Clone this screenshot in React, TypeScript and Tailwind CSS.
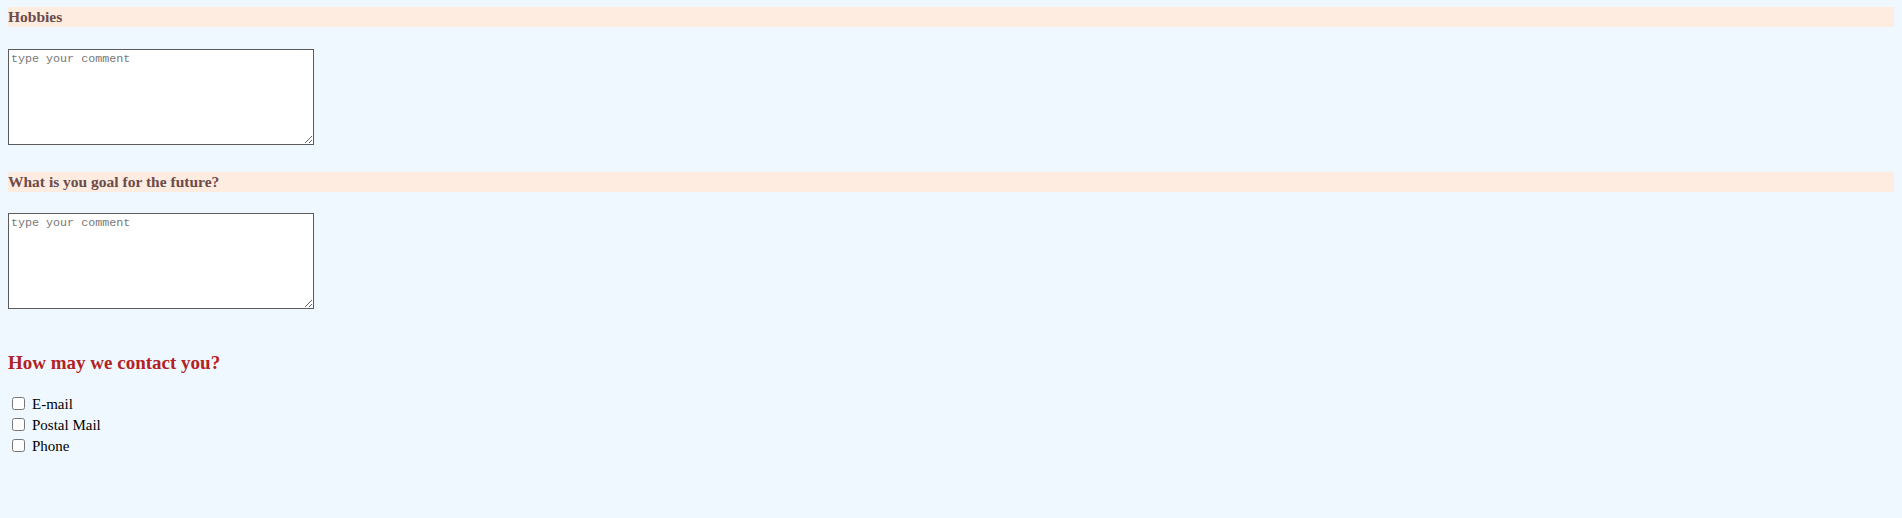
import React from "react";

const serif = { fontFamily: '"Liberation Serif", "Times New Roman", serif' };

function Bar({ children }: { children: React.ReactNode }) {
  return (
    <div
      className="h-[20px] bg-[#fdecdf] text-[#6b4b4b] font-bold text-[15.5px] leading-[20px]"
      style={serif}
    >
      {children}
    </div>
  );
}

function Area() {
  return (
    <textarea
      placeholder="type your comment"
      className="block w-[306px] h-[96px] border border-[#5b5b5b] bg-white p-[2px] text-[11.7px] leading-[14px] placeholder:text-[#777] resize"
      style={{ fontFamily: '"Liberation Mono", "DejaVu Sans Mono", monospace' }}
    />
  );
}

function Check({ label }: { label: string }) {
  return (
    <label className="flex items-center h-[21px] text-[15px] text-black" style={serif}>
      <input type="checkbox" className="w-[13px] h-[13px] ml-[4px] mr-[7px]" />
      <span className="translate-y-[1px]">{label}</span>
    </label>
  );
}

export default function App() {
  return (
    <div className="min-h-[518px] bg-[#f0f8ff] px-[8px] pt-[7px]" style={serif}>
      <Bar>Hobbies</Bar>
      <div className="mt-[22px]">
        <Area />
      </div>
      <div className="mt-[27px]">
        <Bar>What is you goal for the future?</Bar>
      </div>
      <div className="mt-[21px]">
        <Area />
      </div>
      <h3 className="mt-[43px] text-[19px] font-bold text-[#b22222] leading-[22px]" style={serif}>
        How may we contact you?
      </h3>
      <div className="mt-[19px] flex flex-col">
        <Check label="E-mail" />
        <Check label="Postal Mail" />
        <Check label="Phone" />
      </div>
    </div>
  );
}
